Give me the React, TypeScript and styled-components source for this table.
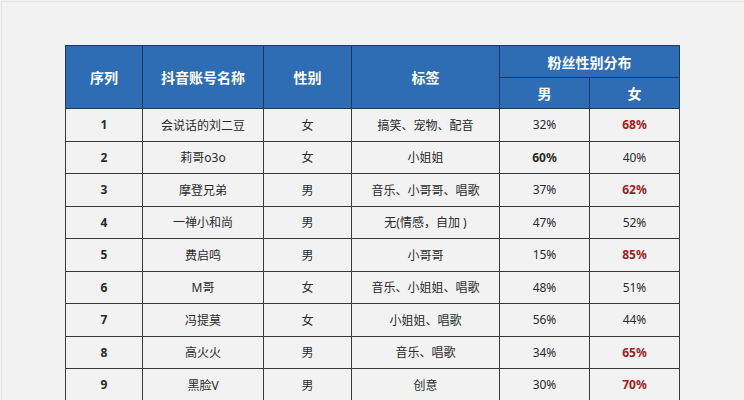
import React from 'react';
import styled, { createGlobalStyle } from 'styled-components';

interface Row {
  no: number;
  name: string;
  gender: string;
  tags: string;
  male: string;
  female: string;
  maleBold?: boolean;
  femaleRed?: boolean;
}

const rows: Row[] = [
  { no: 1, name: '会说话的刘二豆', gender: '女', tags: '搞笑、宠物、配音', male: '32%', female: '68%', femaleRed: true },
  { no: 2, name: '莉哥o3o', gender: '女', tags: '小姐姐', male: '60%', female: '40%', maleBold: true },
  { no: 3, name: '摩登兄弟', gender: '男', tags: '音乐、小哥哥、唱歌', male: '37%', female: '62%', femaleRed: true },
  { no: 4, name: '一禅小和尚', gender: '男', tags: '无(情感，自加 )', male: '47%', female: '52%' },
  { no: 5, name: '费启鸣', gender: '男', tags: '小哥哥', male: '15%', female: '85%', femaleRed: true },
  { no: 6, name: 'M哥', gender: '女', tags: '音乐、小姐姐、唱歌', male: '48%', female: '51%' },
  { no: 7, name: '冯提莫', gender: '女', tags: '小姐姐、唱歌', male: '56%', female: '44%' },
  { no: 8, name: '高火火', gender: '男', tags: '音乐、唱歌', male: '34%', female: '65%', femaleRed: true },
  { no: 9, name: '黑脸V', gender: '男', tags: '创意', male: '30%', female: '70%', femaleRed: true },
];

const GlobalStyle = createGlobalStyle`
  html, body {
    margin: 0;
    padding: 0;
    background: #f2f2f2;
    overflow: hidden;
  }
  body {
    font-family: "Noto Sans", "Noto Sans CJK SC", sans-serif;
  }
`;

function App() {
  return (
    <Page>
      <GlobalStyle />
      <Frame>
        <Table>
          <colgroup>
            <col style={{ width: 77 }} />
            <col style={{ width: 121 }} />
            <col style={{ width: 88 }} />
            <col style={{ width: 148 }} />
            <col style={{ width: 90 }} />
            <col style={{ width: 90 }} />
          </colgroup>
          <thead>
            <HeadRow $h={32}>
              <Th rowSpan={2}>序列</Th>
              <Th rowSpan={2}>抖音账号名称</Th>
              <Th rowSpan={2}>性别</Th>
              <Th rowSpan={2}>标签</Th>
              <Th colSpan={2}>粉丝性别分布</Th>
            </HeadRow>
            <HeadRow $h={31}>
              <Th>男</Th>
              <Th>女</Th>
            </HeadRow>
          </thead>
          <tbody>
            {rows.map((r) => (
              <BodyRow key={r.no}>
                <Td $bold>{r.no}</Td>
                <Td>{r.name}</Td>
                <Td>{r.gender}</Td>
                <Td>{r.tags}</Td>
                <Td $bold={r.maleBold}>{r.male}</Td>
                <Td $bold={r.femaleRed} $red={r.femaleRed}>
                  {r.female}
                </Td>
              </BodyRow>
            ))}
          </tbody>
        </Table>
      </Frame>
    </Page>
  );
}

export default App;

const Page = styled.div`
  width: 744px;
  height: 400px;
  padding: 1px 0 0 1px;
  box-sizing: border-box;
`;

const Frame = styled.div`
  height: 100%;
  box-sizing: border-box;
  border-top: 1px solid #e2e2e2;
  border-left: 1px solid #e2e2e2;
  padding: 43px 0 0 63px;
`;

const Table = styled.table`
  border-collapse: collapse;
  table-layout: fixed;
  width: 614px;
  background: #f2f2f2;
  border: 1px solid #2b2b2b;
`;

const HeadRow = styled.tr<{ $h: number }>`
  height: ${({ $h }) => $h}px;
`;

const Th = styled.th`
  background: #2e6db4;
  color: #ffffff;
  font-size: 14px;
  font-weight: 700;
  text-align: center;
  padding: 0;
  border: 1px solid #1b3a63;
`;

const BodyRow = styled.tr`
  height: 32.5px;
`;

const Td = styled.td<{ $bold?: boolean; $red?: boolean }>`
  border: 1px solid #3a3a3a;
  padding: 0;
  text-align: center;
  font-size: 12px;
  color: ${({ $red }) => ($red ? '#a11d1d' : '#2a2a2a')};
  font-weight: ${({ $bold }) => ($bold ? 700 : 400)};
`;
